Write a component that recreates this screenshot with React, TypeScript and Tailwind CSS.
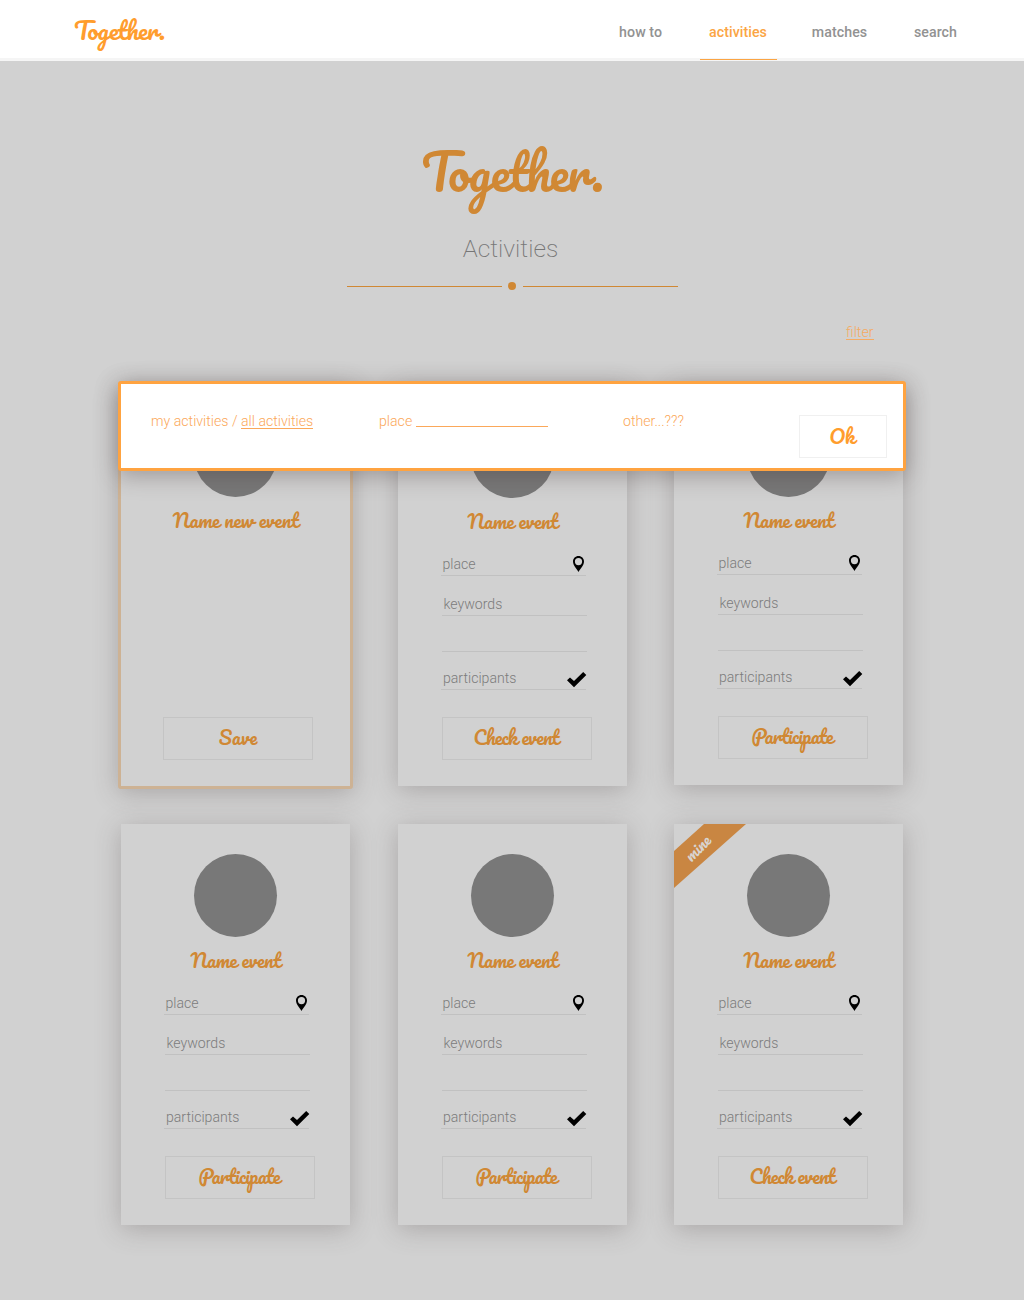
import React from 'react';

const SCRIPT = "font-['Pacifico',cursive] font-normal whitespace-nowrap";

function Wordmark() {
  return (
    <>
      <span className="tracking-[-0.15em]">T</span>
      <span className="tracking-[-0.026em]">ogether.</span>
    </>
  );
}

function Pin() {
  return (
    <svg width="11" height="16" viewBox="0 0 11 16" className="block">
      <path fillRule="evenodd" d="M5.5 0C2.4 0 0 2.4 0 5.5C0 9.2 3.3 12 5.5 16C7.7 12 11 9.2 11 5.5C11 2.4 8.6 0 5.5 0ZM5.5 2A3.6 3.6 0 1 1 5.5 9.2A3.6 3.6 0 1 1 5.5 2Z" fill="#000" />
    </svg>
  );
}

function Check() {
  return (
    <svg width="20" height="16" viewBox="0 0 20 16" className="block">
      <path d="M0 8.3L3 5.4L7 9L16.2 0L19.3 3L7 15.2Z" fill="#000" />
    </svg>
  );
}

function Field({ label, icon, className }: { label?: string; icon?: React.ReactNode; className: string }) {
  return (
    <div className={`flex w-[145px] shrink-0 items-end justify-between border-b border-[#c1c1c1] ${className}`}>
      <span className="text-[14.1px] leading-5 font-light text-[#7c7c7c]">{label}</span>
      {icon}
    </div>
  );
}

type CardProps = { action: string; mine?: boolean; className?: string };

const CARD = 'relative flex h-[401px] w-[229px] shrink-0 flex-col bg-[#d1d1d1] shadow-[0_4px_24px_rgba(80,70,70,0.3)]';

function EventCard({ action, mine, className = '' }: CardProps) {
  return (
    <article className={`${CARD} ${className}`}>
      {mine && (
        <div className="absolute top-0 left-0 h-16 w-[72px] overflow-hidden">
          <svg width="72" height="64" className="absolute inset-0">
            <path d="M30 0H72L0 64V27Z" fill="#c98642" />
          </svg>
          <span className={`${SCRIPT} absolute top-[14px] left-[9px] -rotate-45 text-[15.5px] leading-5 text-[#d8d4cf]`}>mine</span>
        </div>
      )}
      <div className="mt-[30px] size-[83px] shrink-0 self-center rounded-full bg-[#787878]" />
      <h2 className={`${SCRIPT} h-12 shrink-0 pt-[9px] text-center text-[19px] leading-7 tracking-[-0.3px] text-[#d08834]`}>Name event</h2>
      <Field label="place" className="ml-[43px] h-[30px] pb-px pl-[1.5px]" icon={<span className="mr-[2px] mb-[2px]"><Pin /></span>} />
      <Field label="keywords" className="ml-[44px] h-10 pb-px pl-[1.5px]" />
      <Field className="ml-[44px] h-9" />
      <Field label="participants" className="ml-[43px] h-[38px] pb-px pl-[2px]" icon={<span className="-mr-px"><Check /></span>} />
      <button className={`${SCRIPT} mt-[27px] ml-[44px] h-[43px] w-[150px] border border-[#c4c4c4] pr-0.5 pb-[3px] text-[19px] leading-7 tracking-[-0.7px] text-[#d08834]`}>{action}</button>
    </article>
  );
}

function NewEventCard() {
  return (
    <article className="-mx-[3px] -mt-[3px] flex h-[407px] w-[235px] shrink-0 flex-col rounded-[3px] border-[3px] border-[#cdb294] bg-[#d1d1d1] shadow-[0_4px_24px_rgba(80,70,70,0.3)]">
      <div className="mt-[29px] size-[83px] shrink-0 self-center rounded-full bg-[#787878]" />
      <h2 className={`${SCRIPT} pt-[9px] text-center text-[19px] leading-7 tracking-[-0.2px] text-[#d08834]`}>Name new event</h2>
      <button className={`${SCRIPT} mt-auto mb-[26px] ml-[42px] h-[43px] w-[150px] border border-[#c4c4c4] pb-[3px] text-[19px] leading-7 text-[#d08834]`}>Save</button>
    </article>
  );
}

export default function App() {
  return (
    <div className="h-[1300px] w-[1024px] overflow-hidden bg-[#d1d1d1] font-['Roboto',sans-serif]">
      <header className="flex h-[61px] justify-between border-b-[3px] border-[#f5f5f5] bg-white">
        <div className={`${SCRIPT} pt-[9px] pl-[74px] text-[24.3px] leading-[42px] text-[#ff9d2d]`}><Wordmark /></div>
        <nav className="mr-[55px] flex text-[14.2px] leading-[64px] font-[480] tracking-[0.05px] text-[#929292]">
          <a className="mr-[38px]">how to</a>
          <a className="h-[60px] w-[77px] border-b border-[#fba544] pr-px text-center text-[#fba544]">activities</a>
          <a className="w-[125px] text-center">matches</a>
          <a className="w-[67px] text-center">search</a>
        </nav>
      </header>

      <main>
        <section className="flex flex-col items-center">
          <h1 className={`${SCRIPT} mt-[66px] h-[100px] text-[48.7px] leading-[90px] text-[#d08834]`}><Wordmark /></h1>
          <p className="mt-[6px] mr-[3px] text-[24.6px] leading-8 font-extralight text-[#777]">Activities</p>
          <div className="mt-[16px] flex h-2.5 w-[331px] items-center justify-between">
            <span className="h-px w-[155px] bg-[#d08834]" />
            <span className="size-2 rounded-full bg-[#d08834]" />
            <span className="h-px w-[155px] bg-[#d08834]" />
          </div>
        </section>
        <div className="flex h-[94px] justify-end pt-[31px] pr-[150.5px] text-[14.2px] leading-5 font-light text-[#f5ab62]">
          <a className="h-[18px] border-b border-[#f5ab62]">filter</a>
        </div>

        <section className="relative mx-auto w-[782px]">
          <div className="flex items-start">
            <NewEventCard />
            <EventCard className="ml-[48px]" action="Check event" />
            <EventCard className="-mt-px ml-[47px]" action="Participate" />
          </div>
          <div className="mt-[35px] flex items-start">
            <EventCard action="Participate" />
            <EventCard className="ml-[48px]" action="Participate" />
            <EventCard className="ml-[47px]" action="Check event" mine />
          </div>

          <div className="absolute -top-1 -left-[3px] flex h-[90px] w-[788px] rounded-[3px] border-[3px] border-[#ffa340] bg-white text-[14.15px] leading-5 font-light text-[#fba85a] shadow-[0_5px_22px_rgba(70,55,55,0.36)]">
            <div className="mt-[27px] ml-[30px] w-[228px] whitespace-nowrap">
              my activities / <span className="inline-block h-[18px] border-b border-[#fba85a]">all activities</span>
            </div>
            <div className="mt-[27px] flex w-[244px]">
              place<span className="ml-1 h-4 w-[132px] border-b border-[#fba85a]" />
            </div>
            <div className="mt-[27px]">other...???</div>
            <button className={`${SCRIPT} mt-[31px] mr-4 ml-auto h-[43px] w-[88px] border border-[#f0f0f0] pr-0.5 pb-[2px] text-[19.5px] leading-7 tracking-[-0.4px] text-[#ff9d2d]`}>Ok</button>
          </div>
        </section>
      </main>
    </div>
  );
}
